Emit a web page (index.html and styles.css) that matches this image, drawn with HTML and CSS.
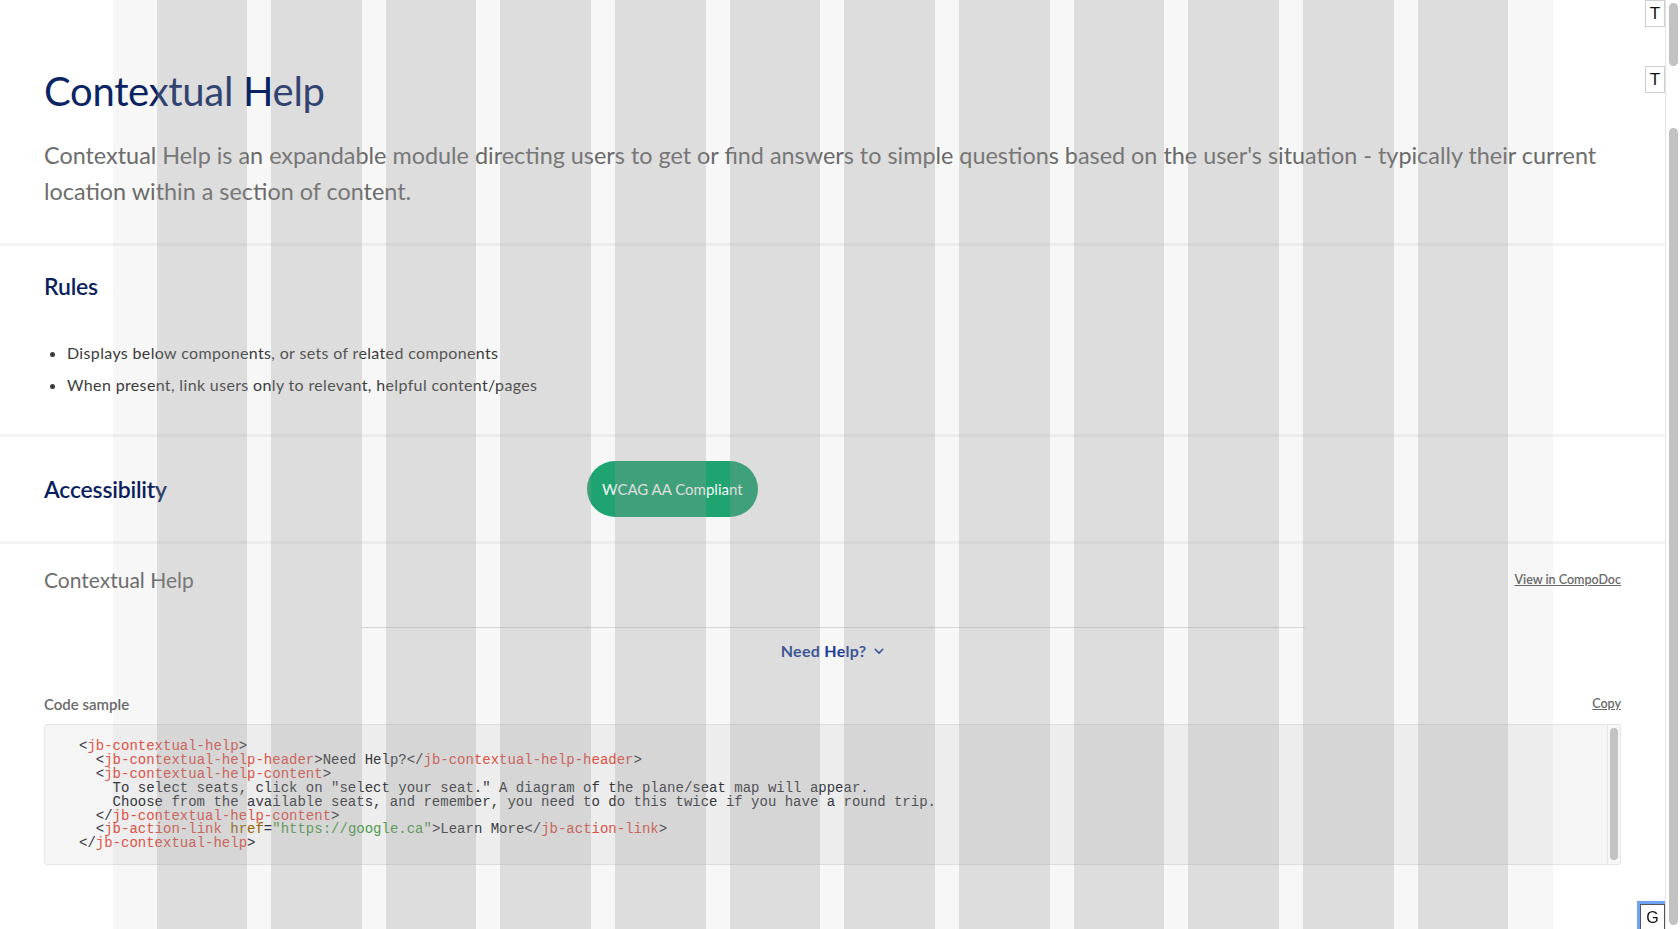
FILE: index.html
```html
<!DOCTYPE html>
<html lang="en">
<head>
<meta charset="utf-8">
<title>Contextual Help</title>
<link rel="stylesheet" href="styles.css">
</head>
<body>
<main class="page">
  <header class="hero">
    <h1 class="hero-title">Contextual Help</h1>
    <p class="hero-lead">Contextual Help is an expandable module directing users to get or find answers to simple questions based on the user's situation - typically their current location within a section of content.</p>
  </header>

  <section class="block rules">
    <h2 class="block-title">Rules</h2>
    <ul class="rule-list">
      <li>Displays below components, or sets of related components</li>
      <li>When present, link users only to relevant, helpful content/pages</li>
    </ul>
  </section>

  <section class="block access">
    <h2 class="block-title">Accessibility</h2>
    <div class="access-badge-wrap"><span class="badge">WCAG AA Compliant</span></div>
  </section>

  <section class="block demo">
    <div class="demo-head">
      <h3 class="demo-title">Contextual Help</h3>
      <a class="small-link" href="#">View in CompoDoc</a>
    </div>
    <div class="demo-stage">
      <div class="help">
        <button class="help-toggle" type="button">Need Help?
          <svg class="chev" width="10" height="7" viewBox="0 0 10 7" aria-hidden="true"><path d="M1.2 1.3 L5 5.1 L8.8 1.3" fill="none" stroke="#1b3f9a" stroke-width="1.6" stroke-linecap="round" stroke-linejoin="round"/></svg>
        </button>
      </div>
    </div>
    <div class="code-head">
      <span class="code-label">Code sample</span>
      <a class="small-link" href="#">Copy</a>
    </div>
    <div class="code-box">
<pre class="code"><code>&lt;<span class="t">jb-contextual-help</span>&gt;
  &lt;<span class="t">jb-contextual-help-header</span>&gt;Need Help?&lt;/<span class="t">jb-contextual-help-header</span>&gt;
  &lt;<span class="t">jb-contextual-help-content</span>&gt;
    To select seats, click on "select your seat." A diagram of the plane/seat map will appear.
    Choose from the available seats, and remember, you need to do this twice if you have a round trip.
  &lt;/<span class="t">jb-contextual-help-content</span>&gt;
  &lt;<span class="t">jb-action-link</span> <span class="a">href</span>=<span class="s">"https://google.ca"</span>&gt;Learn More&lt;/<span class="t">jb-action-link</span>&gt;
&lt;/<span class="t">jb-contextual-help</span>&gt;</code></pre>
      <div class="code-rail" aria-hidden="true"><div class="code-thumb"></div></div>
    </div>
  </section>
</main>

<div class="grid-overlay" aria-hidden="true">
  <div class="col"></div><div class="col"></div><div class="col"></div><div class="col"></div>
  <div class="col"></div><div class="col"></div><div class="col"></div><div class="col"></div>
  <div class="col"></div><div class="col"></div><div class="col"></div><div class="col"></div>
</div>

<div class="tool tool-t1">T</div>
<div class="tool tool-t2">T</div>
<button class="tool tool-g" type="button">G</button>

<div class="scrollbar" aria-hidden="true">
  <div class="thumb thumb-top"></div>
  <div class="thumb thumb-main"></div>
</div>
</body>
</html>
```
FILE: styles.css
```css
html {
  background: #fff;
}

body {
  margin: 0 15px 0 0;
  font-family: "Lato", "Noto Sans", sans-serif;
  color: #3c3c3c;
}

.page {
  padding-bottom: 60px;
}

.hero {
  padding: 66px 44px 34px;
}
.hero-title {
  margin: 0;
  font-size: 40px;
  line-height: 50px;
  font-weight: 400;
  letter-spacing: -0.3px;
  color: #0a2566;
}
.hero-lead {
  margin: 21px 0 0;
  font-size: 23.4px;
  line-height: 36px;
  font-weight: 400;
  color: #6e6e6e;
}

.block {
  border-top: 3px solid #f4f4f4;
  padding: 0 44px;
}

.block-title {
  margin: 0;
  font-size: 23px;
  line-height: 32px;
  font-weight: 600;
  letter-spacing: -0.2px;
  color: #0b1f5e;
}

.rules {
  padding-top: 24px;
  padding-bottom: 33px;
}
.rule-list {
  margin: 35px 0 0;
  padding: 0 0 0 23px;
  font-size: 16px;
  line-height: 32px;
  letter-spacing: 0.35px;
  color: #3c3c3c;
}

.access {
  display: grid;
  grid-template-columns: 543px 1fr;
  align-items: center;
  padding-top: 24px;
  padding-bottom: 24px;
}
.badge {
  display: inline-flex;
  align-items: center;
  height: 56px;
  padding: 0 15px;
  border-radius: 28px;
  background: #20a974;
  color: #fff;
  font-size: 15px;
}

.demo {
  padding-top: 22px;
}
.demo-head {
  display: flex;
  justify-content: space-between;
  align-items: center;
}
.demo-title {
  margin: 0;
  font-size: 21px;
  line-height: 28px;
  font-weight: 400;
  color: #6f6f6f;
}
.small-link {
  font-size: 12.5px;
  line-height: 16px;
  font-weight: 600;
  color: #6b6b6b;
  text-decoration: underline;
}

.demo-stage {
  margin-top: 33px;
  display: flex;
  justify-content: center;
}
.help {
  width: 944px;
  border-top: 1px solid #dcdcdc;
  padding-top: 12px;
  display: flex;
  justify-content: center;
}
.help-toggle {
  display: inline-flex;
  align-items: center;
  gap: 8px;
  margin: 0;
  padding: 0;
  border: 0;
  background: none;
  font-family: inherit;
  font-size: 16px;
  line-height: 22px;
  font-weight: 700;
  letter-spacing: 0.3px;
  color: #1b3f9a;
  cursor: pointer;
}
.chev {
  display: block;
  margin-top: 1px;
}

.code-head {
  margin-top: 32px;
  display: flex;
  justify-content: space-between;
  align-items: center;
}
.code-label {
  font-size: 15px;
  line-height: 20px;
  font-weight: 600;
  color: #6b6b6b;
}

.code-box {
  margin-top: 10px;
  box-sizing: border-box;
  height: 141px;
  display: flex;
  background: #f5f5f5;
  border: 1px solid #e4e4e4;
  border-radius: 3px;
  overflow: hidden;
}
.code {
  flex: 1;
  margin: 0;
  overflow: hidden;
  padding: 15px 34px 0;
  font-family: "Liberation Mono", "Courier New", monospace;
  font-size: 14px;
  line-height: 13.9px;
  color: #383a42;
}
.code code {
  font-family: inherit;
  font-size: inherit;
  line-height: inherit;
}
.code .t { color: #e45649; }
.code .a { color: #986801; }
.code .s { color: #50a14f; }

.code-rail {
  flex: 0 0 13px;
  box-sizing: border-box;
  display: flex;
  padding: 3px 2px 4px 2px;
  background: #f7f7f7;
  border-left: 1px solid #e6e6e6;
}
.code-thumb {
  flex: 1;
  background: #c2c2c2;
  border-radius: 5px;
}

.grid-overlay {
  position: fixed;
  top: 0;
  bottom: 0;
  left: 0;
  right: 15px;
  width: 1440px;
  margin: 0 auto;
  box-sizing: border-box;
  padding: 0 44px;
  display: grid;
  grid-template-columns: repeat(12, 1fr);
  column-gap: 24px;
  background: rgba(0, 0, 0, 0.03);
  pointer-events: none;
  z-index: 10;
}
.grid-overlay .col {
  background: rgba(150, 150, 150, 0.28);
}

.tool {
  position: fixed;
  right: 15px;
  box-sizing: border-box;
  width: 20px;
  height: 27px;
  border: 1px solid #cfcfcf;
  background: #fff;
  font-family: "Liberation Sans", Arial, sans-serif;
  font-size: 17px;
  line-height: 25px;
  text-align: center;
  color: #111;
  z-index: 20;
}
.tool-t1 { top: 0; }
.tool-t2 { top: 66px; }
.tool-g {
  bottom: -3px;
  width: 25px;
  height: 28px;
  padding: 0;
  border: 1px solid #555;
  font-size: 16px;
  line-height: 24px;
  box-shadow: 0 0 0 3px #6ea3f5;
}

.scrollbar {
  position: fixed;
  top: 0;
  right: 0;
  bottom: 0;
  width: 15px;
  box-sizing: border-box;
  background: #fff;
  border-left: 1px solid #e4e4e4;
  z-index: 30;
}
.thumb {
  position: absolute;
  left: 3px;
  width: 9px;
  background: #c2c2c2;
  border-radius: 5px;
}
.thumb-top {
  top: 3px;
  height: 63px;
}
.thumb-main {
  top: 128px;
  bottom: 4px;
}
```
